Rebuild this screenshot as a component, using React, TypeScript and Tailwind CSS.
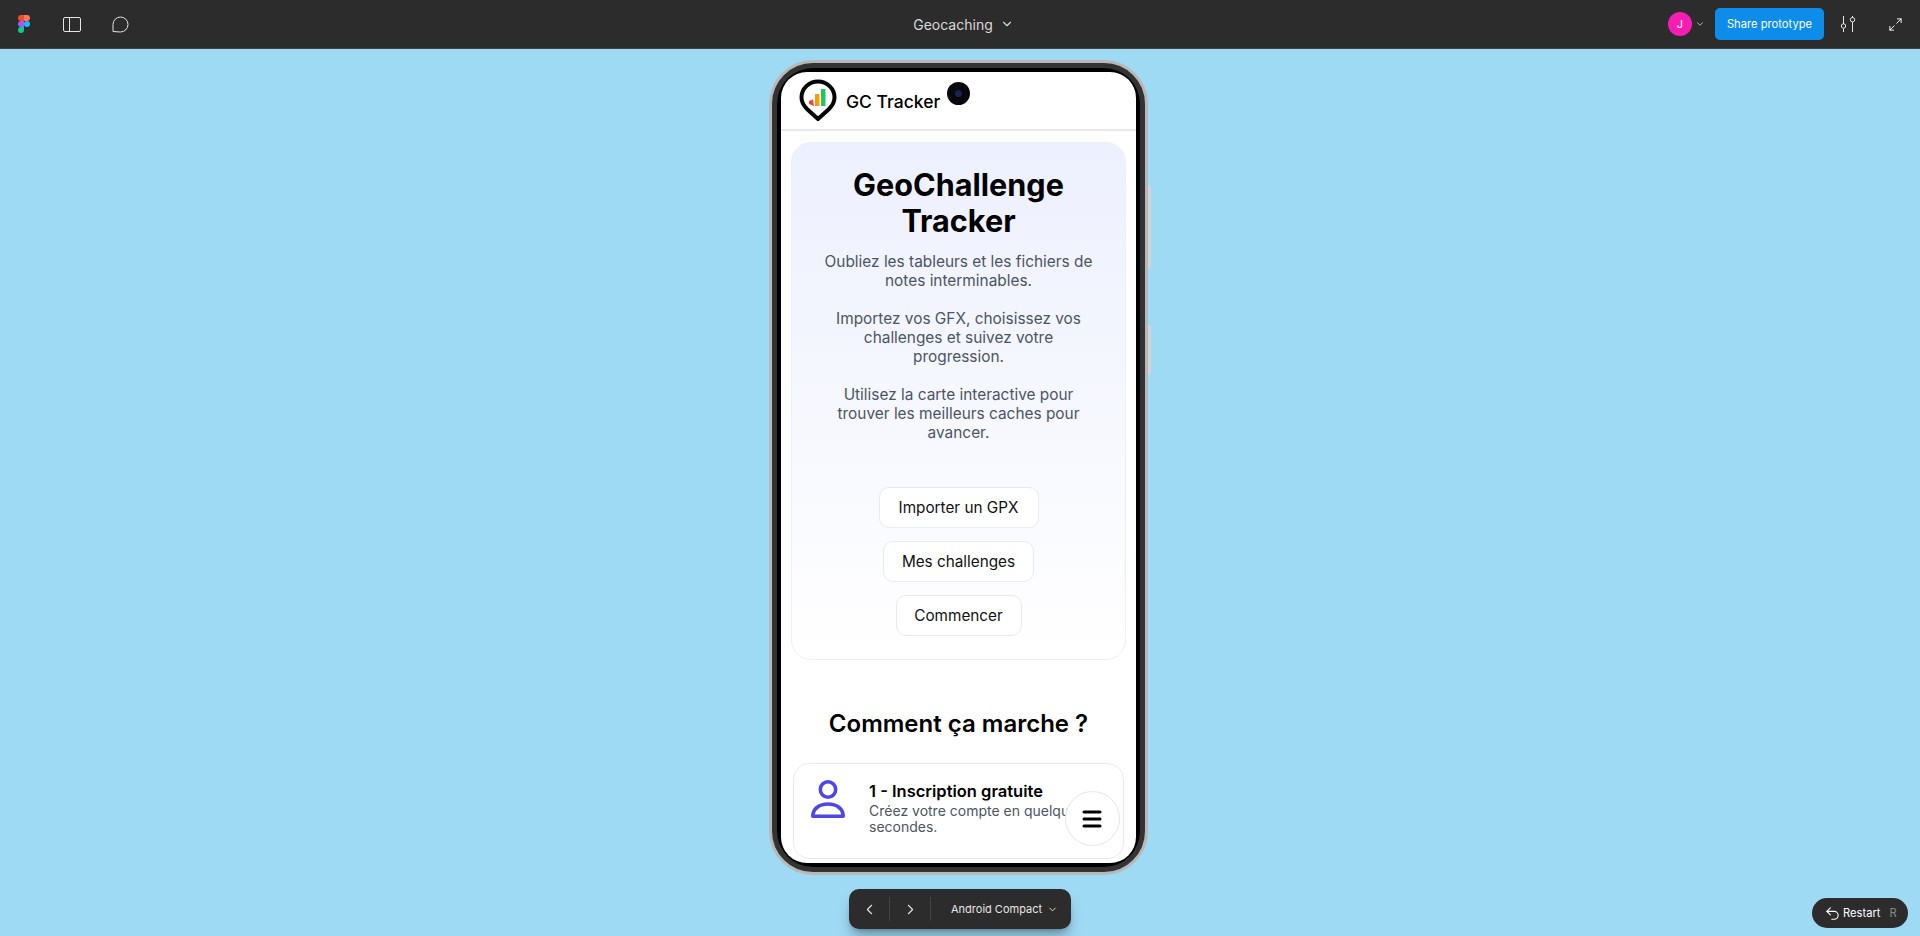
import { ChevronDown, ChevronLeft, ChevronRight, Maximize2, Menu, Undo2 } from 'lucide-react';

function FigmaLogo() {
  return (
    <svg width="12" height="18" viewBox="0 0 12 18">
      <path d="M6 0H3a3 3 0 0 0 0 6h3z" fill="#f24e1e" />
      <path d="M6 0h3a3 3 0 0 1 0 6H6z" fill="#ff7262" />
      <path d="M6 6H3a3 3 0 0 0 0 6h3z" fill="#a259ff" />
      <circle cx="9" cy="9" r="3" fill="#1abcfe" />
      <path d="M6 12H3a3 3 0 1 0 3 3z" fill="#0acf83" />
    </svg>
  );
}

function PinLogo() {
  return (
    <svg width="38" height="43" viewBox="0 0 38 43">
      <path d="M19 40 L8 30 C4.500 26.500 2.500 22.500 2.500 18.500 C2.500 9.500 10 2.500 19 2.500 C28 2.500 35.500 9.500 35.500 18.500 C35.500 22.500 33.500 26.500 30 30 Z" fill="#fff" stroke="#000" strokeWidth="4" strokeLinejoin="round" />
      <path d="M10 25 L10 22 L14 20.500 L15 27 Z" fill="#ef4444" />
      <rect x="16" y="15" width="4.500" height="12" fill="#f59e0b" />
      <rect x="22" y="10" width="4.500" height="17" fill="#22c55e" />
    </svg>
  );
}

function PersonIcon() {
  return (
    <svg className="shrink-0" width="34" height="38" viewBox="0 0 34 38" fill="none" stroke="#4f46e5" strokeWidth="3.600" strokeLinejoin="round">
      <circle cx="17" cy="9.500" r="7.700" />
      <path d="M1.800 36.200 C1.800 28.500 8.500 24 17 24 C25.500 24 32.200 28.500 32.200 36.200 Z" />
    </svg>
  );
}

function TopBar() {
  return (
    <header className="h-[49px] shrink-0 flex items-center bg-[#2c2c2c] border-b border-[#444444] pl-[18px] pr-[17px] text-white">
      <div className="flex-1 flex items-center">
        <FigmaLogo />
        <svg className="ml-[33px]" width="18" height="15" viewBox="0 0 18 15" fill="none" stroke="#e5e5e5">
          <rect x="0.500" y="0.500" width="17" height="14" rx="1.500" />
          <path d="M6.500 0.500v14" />
        </svg>
        <svg className="ml-[31px]" width="17" height="17" viewBox="0 0 17 17" fill="none" stroke="#e5e5e5">
          <path d="M1 15.500V8.500a7.500 7.500 0 1 1 7.500 7.500z" />
        </svg>
      </div>
      <div className="flex items-center gap-[7px] pl-[6px] text-[14px] text-[#d9d9d9]">
        Geocaching
        <ChevronDown size={14} />
      </div>
      <div className="flex-1 flex items-center justify-end">
        <div className="w-6 h-6 rounded-full bg-[#f61eb2] flex items-center justify-center text-[11px]">J</div>
        <ChevronDown size={10} className="ml-[3px] text-[#cccccc]" />
        <button className="ml-[10px] h-[32px] w-[109px] rounded-[5px] bg-[#0d8ce9] text-[11.200px] text-white">Share prototype</button>
        <svg className="ml-[15px]" width="18" height="18" viewBox="0 0 18 18" fill="none" stroke="#e5e5e5">
          <path d="M4.500 1v8M4.500 13.500V17M13.500 1v1.500M13.500 7v10" />
          <circle cx="4.500" cy="11" r="2.200" />
          <circle cx="13.500" cy="4.700" r="2.200" />
        </svg>
        <Maximize2 size={15} strokeWidth={1.500} className="ml-[31px] text-white" />
      </div>
    </header>
  );
}

function HeroButton({ label, width }: { label: string; width: string }) {
  return (
    <button className={`h-[41px] ${width} pt-[2px] rounded-[10px] border border-[#e9e9f2] bg-white text-[15.300px] text-[#111111]`}>
      {label}
    </button>
  );
}

function PhoneScreen() {
  return (
    <div className="relative w-[355px] h-[791px] bg-white rounded-[26px] overflow-hidden">
      <div className="h-[59px] border-b-2 border-[#e7e7e7] flex items-center pl-[18px]">
        <PinLogo />
        <span className="ml-[9px] mt-[3px] text-[17.500px] font-medium text-black">GC Tracker</span>
      </div>

      <section className="mx-[10px] mt-[11px] h-[518px] rounded-[20px] border border-[#eceefb] bg-gradient-to-b from-[#edf0fe] to-white pt-[24px] px-[29px] flex flex-col items-center text-center">
        <h1 className="text-[30.600px] leading-[36px] font-bold text-black">GeoChallenge Tracker</h1>
        <div className="mt-[13px] text-[15.400px] leading-[19px] text-[#4b5563] flex flex-col gap-[19px]">
          <p>Oubliez les tableurs et les fichiers de notes interminables.</p>
          <p>Importez vos GFX, choisissez vos challenges et suivez votre progression.</p>
          <p>Utilisez la carte interactive pour trouver les meilleurs caches pour avancer.</p>
        </div>
        <div className="mt-[45px] flex flex-col items-center gap-[13px]">
          <HeroButton label="Importer un GPX" width="w-[160px]" />
          <HeroButton label="Mes challenges" width="w-[151px]" />
          <HeroButton label="Commencer" width="w-[126px]" />
        </div>
      </section>

      <h2 className="mt-[48px] text-center text-[24px] leading-[32px] font-semibold text-black">Comment ça marche ?</h2>

      <div className="mx-[12px] mt-[23px] h-[96px] rounded-[16px] border border-[#e9e9f2] flex pl-[17px] pr-[16px] pt-[16px]">
        <PersonIcon />
        <div className="ml-[24px] -mt-[1px]">
          <div className="text-[16.500px] leading-[24px] font-semibold text-black">1 - Inscription gratuite</div>
          <p className="text-[14px] leading-[16px] text-[#4b5563]">Créez votre compte en quelques secondes.</p>
        </div>
      </div>

      {/* floating menu */}
      <button className="absolute left-[284px] top-[719px] w-[55px] h-[55px] rounded-full bg-white border border-[#e5e5e5] flex items-center justify-center">
        <Menu size={24} strokeWidth={3} className="text-black -ml-[1px]" />
      </button>
      {/* camera */}
      <div className="absolute left-[166px] top-[10px] w-[23px] h-[23px] rounded-full bg-[#08080c] flex items-center justify-center">
        <div className="w-[7px] h-[7px] rounded-full bg-[#1a2350]" />
      </div>
    </div>
  );
}

function PhoneFrame() {
  return (
    <div className="relative mt-[11px] w-[379px] h-[815px] rounded-[44px] bg-[#333333] border-[3px] border-[#b8b8b8] flex items-center justify-center">
      <div className="w-[363px] h-[799px] rounded-[36px] bg-black flex items-center justify-center">
        <PhoneScreen />
      </div>
      {/* side buttons */}
      <div className="absolute -right-[6px] top-[122px] w-[3px] h-[84px] rounded-r bg-[#d4d4d4]" />
      <div className="absolute -right-[6px] top-[262px] w-[3px] h-[50px] rounded-r bg-[#d4d4d4]" />
    </div>
  );
}

export default function App() {
  return (
    <div className="relative h-[936px] overflow-hidden flex flex-col bg-[#9fdaf5] font-['Inter',sans-serif]">
      <TopBar />
      <main className="flex-1 flex flex-col items-center pr-[3px]">
        <PhoneFrame />
        <div className="mt-[14px] ml-[3px] w-[222px] h-[40px] rounded-[10px] bg-[#2c2c2c] shadow-lg shadow-black/30 flex items-center text-[#e5e5e5] text-[11px]">
          <div className="w-[40px] flex justify-center"><ChevronLeft size={17} strokeWidth={1.500} /></div>
          <div className="w-px h-[24px] bg-[#444444]" />
          <div className="w-[40px] flex justify-center"><ChevronRight size={17} strokeWidth={1.500} /></div>
          <div className="w-px h-[24px] bg-[#444444]" />
          <span className="ml-[20px]">Android Compact</span>
          <ChevronDown size={11} className="ml-[5px]" />
        </div>
      </main>
      <div className="absolute right-[12px] bottom-[8px] w-[96px] h-[30px] rounded-full bg-[#2c2c2c] text-white text-[11.200px] flex items-center pl-[12px]">
        <Undo2 size={17} strokeWidth={1.500} />
        <span className="ml-[2px]">Restart</span>
        <span className="ml-[9px] text-[#8a8a8a]">R</span>
      </div>
    </div>
  );
}
